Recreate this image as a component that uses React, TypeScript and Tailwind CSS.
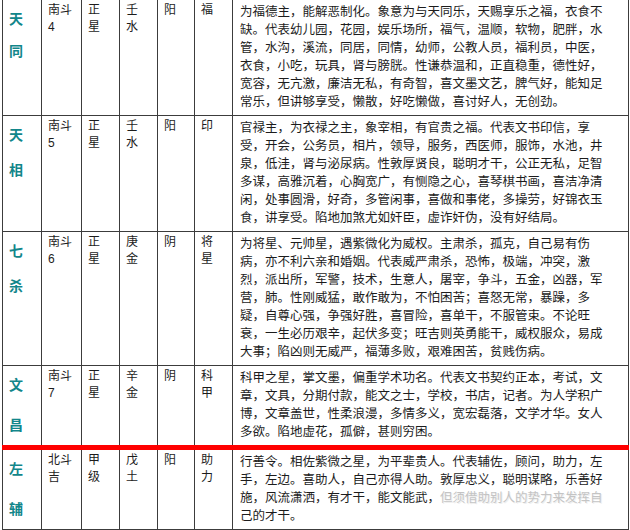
import type { ReactNode } from "react";

interface StarRow {
    name: [string, string];
    group: string[];
    level: string[];
    element: string[];
    yinYang: string;
    role: string[];
    lines: ReactNode[];
    nameGap: string;
    red?: boolean;
}

const rows: StarRow[] = [
    {
        name: ["天", "同"],
        group: ["南斗", "4"],
        level: ["正", "星"],
        element: ["壬", "水"],
        yinYang: "阳",
        role: ["福"],
        nameGap: "mt-[14px]",
        lines: [
            "为福德主，能解恶制化。象意为与天同乐，天赐享乐之福，衣食不",
            "缺。代表幼儿园，花园，娱乐场所，福气，温顺，软物，肥胖，水",
            "管，水沟，溪流，同居，同情，幼师，公教人员，福利员，中医，",
            "衣食，小吃，玩具，肾与膀胱。性谦恭温和，正直稳重，德性好，",
            "宽容，无亢激，廉洁无私，有奇智，喜文墨文艺，脾气好，能知足",
            "常乐，但讲够享受，懒散，好吃懒做，喜讨好人，无创劲。",
        ],
    },
    {
        name: ["天", "相"],
        group: ["南斗", "5"],
        level: ["正", "星"],
        element: ["壬", "水"],
        yinYang: "阳",
        role: ["印"],
        nameGap: "mt-[17px]",
        lines: [
            "官禄主，为衣禄之主，象宰相，有官贵之福。代表文书印信，享",
            "受，开会，公务员，相片，领导，服务，西医师，服饰，水池，井",
            "泉，低洼，肾与泌尿病。性敦厚贤良，聪明才干，公正无私，足智",
            "多谋，高雅沉着，心胸宽广，有恻隐之心，喜琴棋书画，喜洁净清",
            "闲，处事圆滑，好奇，多管闲事，喜做和事佬，多操劳，好锦衣玉",
            "食，讲享受。陷地加煞尤如奸臣，虚诈奸伪，没有好结局。",
        ],
    },
    {
        name: ["七", "杀"],
        group: ["南斗", "6"],
        level: ["正", "星"],
        element: ["庚", "金"],
        yinYang: "阴",
        role: ["将", "星"],
        nameGap: "mt-[17px]",
        lines: [
            "为将星、元帅星，遇紫微化为威权。主肃杀，孤克，自己易有伤",
            "病，亦不利六亲和婚姻。代表威严肃杀，恐怖，极端，冲突，激",
            "烈，派出所，军警，技术，生意人，屠宰，争斗，五金，凶器，军",
            "营，肺。性刚威猛，敢作敢为，不怕困苦；喜怒无常，暴躁，多",
            "疑，自尊心强，争强好胜，喜冒险，喜单干，不服管束。不论旺",
            "衰，一生必历艰辛，起伏多变；旺吉则英勇能干，威权服众，易成",
            "大事；陷凶则无威严，福薄多败，艰难困苦，贫贱伤病。",
        ],
    },
    {
        name: ["文", "昌"],
        group: ["南斗", "7"],
        level: ["正", "星"],
        element: ["辛", "金"],
        yinYang: "阴",
        role: ["科", "甲"],
        nameGap: "mt-[22px]",
        lines: [
            "科甲之星，掌文墨，偏重学术功名。代表文书契约正本，考试，文",
            "章，文具，分期付款，能文之士，学校，书店，记者。为人学积广",
            "博，文章盖世，性柔浪漫，多情多义，宽宏磊落，文学才华。女人",
            "多欲。陷地虚花，孤僻，甚则穷困。",
        ],
    },
    {
        name: ["左", "辅"],
        group: ["北斗", "吉"],
        level: ["甲", "级"],
        element: ["戊", "土"],
        yinYang: "阳",
        role: ["助", "力"],
        nameGap: "mt-[22px]",
        red: true,
        lines: [
            "行善令。相佐紫微之星，为平辈贵人。代表辅佐，顾问，助力，左",
            "手，左边。喜助人，自己亦得人助。敦厚忠义，聪明谋略，乐善好",
            <>
                施，风流潇洒，有才干，能文能武，
                <span className="text-[#c4c4c4] [text-shadow:1px_1px_0_#eeeeee]">
                    但须借助别人的势力来发挥自
                </span>
            </>,
            "己的才干。",
        ],
    },
];

function Stack({ items }: { items: string[] }) {
    return (
        <>
            {items.map((item, i) => (
                <div key={i}>{item}</div>
            ))}
        </>
    );
}

export default function App() {
    const cell =
        "border border-[#3c3c3c] align-top pl-[6px] pr-[2px] pt-[2px] leading-[17px] text-[12px]";

    return (
        <div
            className="min-h-screen overflow-hidden bg-white pl-[2px] text-[#1c1c1c]"
            style={{ fontFamily: '"Liberation Sans", "Noto Sans CJK SC", sans-serif' }}
        >
            <table className="w-[626px] table-fixed border-collapse">
                <colgroup>
                    <col className="w-[39px]" />
                    <col className="w-[40px]" />
                    <col className="w-[38px]" />
                    <col className="w-[38px]" />
                    <col className="w-[37px]" />
                    <col className="w-[38px]" />
                    <col className="w-[396px]" />
                </colgroup>
                <tbody>
                    {rows.map((row, idx) => {
                        const edge = row.red
                            ? "border-t-[5px] border-t-[#ff0000]"
                            : idx === 0
                              ? "border-t-0"
                              : "";
                        return (
                            <tr key={row.name.join("")}>
                                <td
                                    className={`border border-[#3c3c3c] align-top pl-[6px] pt-[10px] text-[14px] font-bold leading-[18px] text-[#12868a] ${edge}`}
                                >
                                    <div>{row.name[0]}</div>
                                    <div className={row.nameGap}>{row.name[1]}</div>
                                </td>
                                <td className={`${cell} ${edge}`}>
                                    <Stack items={row.group} />
                                </td>
                                <td className={`${cell} ${edge}`}>
                                    <Stack items={row.level} />
                                </td>
                                <td className={`${cell} ${edge}`}>
                                    <Stack items={row.element} />
                                </td>
                                <td className={`${cell} ${edge}`}>
                                    {row.yinYang}
                                </td>
                                <td className={`${cell} ${edge}`}>
                                    <Stack items={row.role} />
                                </td>
                                <td
                                    className={`border border-[#3c3c3c] align-top whitespace-nowrap pl-[7px] pt-[3px] pb-[4px] text-[12.5px] leading-[18px] ${edge}`}
                                >
                                    {row.lines.map((line, i) => (
                                        <div key={i}>{line}</div>
                                    ))}
                                </td>
                            </tr>
                        );
                    })}
                </tbody>
            </table>
        </div>
    );
}
